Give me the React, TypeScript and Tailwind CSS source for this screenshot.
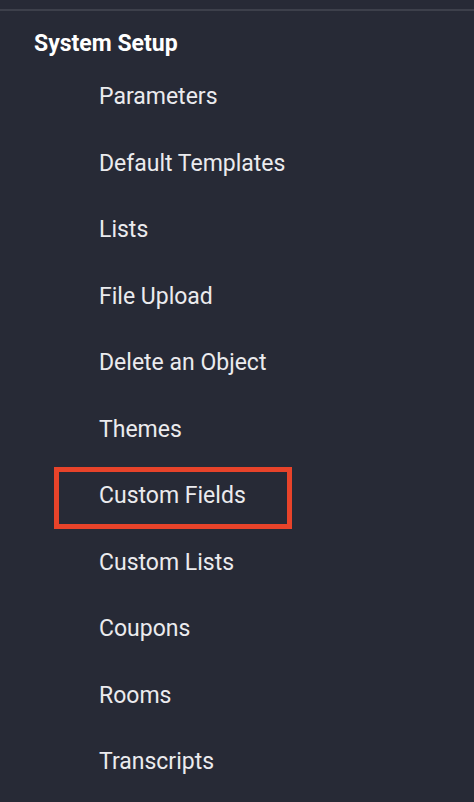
const items = [
  'Parameters',
  'Default Templates',
  'Lists',
  'File Upload',
  'Delete an Object',
  'Themes',
  'Custom Fields',
  'Custom Lists',
  'Coupons',
  'Rooms',
  'Transcripts',
];

export default function App() {
  return (
    <div className="min-h-screen bg-[#272a36] pt-[9px] font-['Roboto',sans-serif] overflow-hidden">
      <div className="h-[2px] bg-[#3d404b]" />
      {/* Section header */}
      <div className="pl-[34px] pt-[20px] text-[23px] leading-[26px] font-bold text-white">System Setup</div>
      <ul className="mt-[7px]">
        {items.map((item) => (
          <li key={item} className="h-[66.5px] flex items-center pl-[54px]">
            <div
              className={
                item === 'Custom Fields'
                  ? 'w-[238px] h-[62px] mt-[4px] flex items-center pl-[40px] pb-[4px] border-[5px] border-[#e8432a]'
                  : 'w-[238px] h-[62px] flex items-center pl-[40px] border-[5px] border-transparent'
              }
            >
              <span className="text-[23px] whitespace-nowrap text-[#ebebee]">{item}</span>
            </div>
          </li>
        ))}
      </ul>
    </div>
  );
}
